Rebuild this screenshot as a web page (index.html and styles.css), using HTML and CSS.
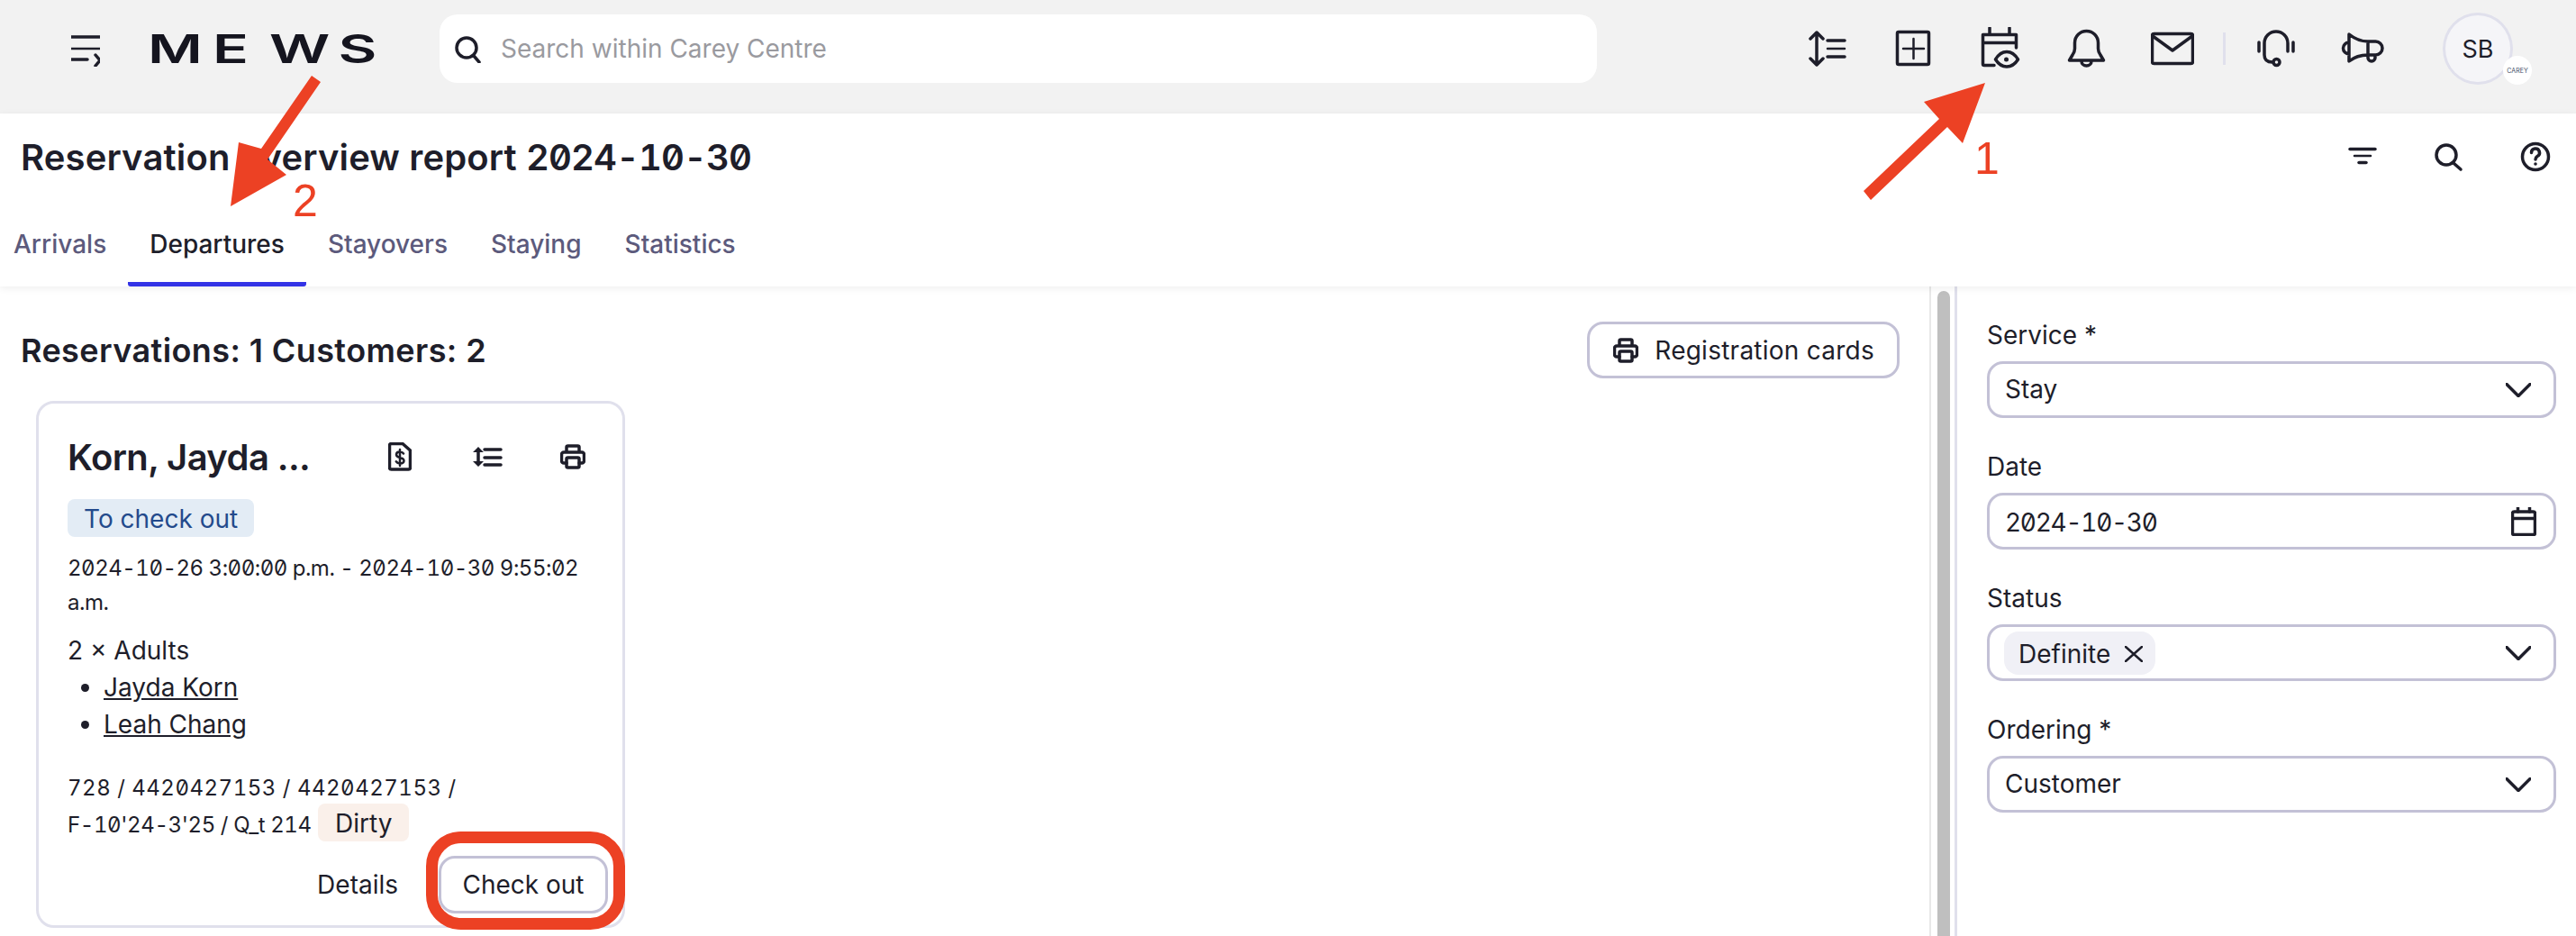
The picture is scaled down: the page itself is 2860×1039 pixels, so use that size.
FILE: index.html
```html
<!DOCTYPE html>
<html lang="en">
  <head>
    <meta charset="UTF-8" />
    <title>Reservation overview report</title>
    <link rel="stylesheet" href="styles.css">
  </head>
  <body>
    <header class="topbar">
      <svg class="menu-icon ico" width="32" height="40" viewBox="0 0 32 40"><path d="M0 7H32M0 32H18M27 27L32 33L27 39"/><path class="thin" d="M0 20H32"/></svg>
      <svg class="logo" width="254" height="32" viewBox="0 0 254 32"><text transform="scale(1.5 1)" x="-2 46 88 139" y="32" font-size="44" font-weight="600">MEWS</text></svg>
      <div class="search">
        <svg class="ico" width="32" height="32" viewBox="0 0 32 32"><circle cx="14" cy="15" r="11"/><path d="M22 24L28 31"/></svg>
        <span>Search within Carey Centre</span>
      </div>
      <div class="actions">
        <span class="icon-btn"><svg class="ico" width="48" height="48" viewBox="0 0 48 48"><path d="M13 6V42M6 13L13 6L20 13M6 35L13 42L20 35M25 15H44M25 33H44"/><path class="thin" d="M25 24H44"/></svg></span>
        <span class="icon-btn"><svg class="ico" width="48" height="48" viewBox="0 0 48 48"><rect x="6.5" y="5.5" width="35" height="36" rx="1.5"/><path class="thin" d="M13 24H36M24.5 13V35"/></svg></span>
        <span class="icon-btn"><svg class="ico" width="48" height="48" viewBox="0 0 48 48"><path d="M18 42.5H7a1.5 1.5 0 0 1-1.5-1.5V8.5H42.5V23M5.5 17.5H42.5M13 1V8M35 1V8M19.5 36C23 30 27 27.5 32 27.5S41 30 44.5 36C41 41.5 37 44 32 44S23 41.5 19.5 36Z"/><circle class="dot" cx="31.5" cy="36" r="2.5"/></svg></span>
        <span class="icon-btn"><svg class="ico" width="48" height="48" viewBox="0 0 48 48"><path d="M5.5 37L9 31Q11.5 27.5 11.5 24V17.5A13 13 0 0 1 37.5 17.5V24Q37.5 27.5 40 31L43.5 37ZM19 38a5.5 5 0 0 0 11 0"/></svg></span>
        <span class="icon-btn"><svg class="ico" width="48" height="48" viewBox="0 0 48 48"><rect x="1.5" y="7.5" width="45" height="33" rx="2"/><path d="M2 10L24 26L46 10"/></svg></span>
        <span class="divider"></span>
        <span class="icon-btn"><svg class="ico" width="48" height="48" viewBox="0 0 48 48"><path d="M5 17V27M43 17V27M37 27V18A13 13 0 0 0 11 18V31Q11 39 20 39"/><circle cx="24.5" cy="39" r="3.5"/></svg></span>
        <span class="icon-btn"><svg class="ico" width="48" height="48" viewBox="0 0 48 48"><path d="M9 8C14 12 22 16 30 16H38.5A7.5 7.5 0 0 1 38.5 31H30C22 31 14 34 9 38ZM9 17A6.5 6.5 0 0 0 9 30M30 16V34a4 4 0 0 0 8 0V31"/></svg></span>
        <div class="avatar">SB<span class="avatar-badge">CAREY</span></div>
      </div>
    </header>

    <div class="report-head">
      <div class="title-row">
        <h1>Reservation overview report <span class="num">2024-10-30</span></h1>
        <div class="title-actions">
          <span class="icon-btn"><svg class="ico" width="48" height="48" viewBox="0 0 48 48"><path d="M10 15.5H38"/><path class="thin" d="M15 23H33"/><path d="M20 30.5H28"/></svg></span>
          <span class="icon-btn"><svg class="ico" width="48" height="48" viewBox="0 0 48 48"><circle cx="21" cy="22" r="11"/><path d="M29 31L37 38"/></svg></span>
          <span class="icon-btn"><svg class="ico" width="48" height="48" viewBox="0 0 48 48"><circle cx="24" cy="24" r="14.5"/><path d="M19.5 19.5a4.5 4.5 0 1 1 6.5 4c-1.5 1-2 2-2 3.5"/><circle class="dot" cx="24" cy="32" r="1.8"/></svg></span>
        </div>
      </div>
      <nav class="tabs">
        <a class="tab">Arrivals</a>
        <a class="tab active">Departures</a>
        <a class="tab">Stayovers</a>
        <a class="tab">Staying</a>
        <a class="tab">Statistics</a>
      </nav>
    </div>

    <main class="content">
      <section class="results">
        <div class="results-head">
          <h2>Reservations: 1 Customers: 2</h2>
          <button class="btn btn-icon">
            <svg class="ico" width="28" height="28" viewBox="0 0 28 28"><path d="M7 9V3.5A1.5 1.5 0 0 1 8.5 2H19.5A1.5 1.5 0 0 1 21 3.5V9M7 21H4a2.5 2.5 0 0 1-2.5-2.5v-7A2.5 2.5 0 0 1 4 9H24a2.5 2.5 0 0 1 2.5 2.5v7A2.5 2.5 0 0 1 24 21H21"/><rect x="7" y="15" width="14" height="11" rx="1.5"/></svg>
            Registration cards
          </button>
        </div>

        <article class="card">
          <div class="card-head">
            <h3>Korn, Jayda ...</h3>
            <div class="card-actions">
              <span class="icon-btn"><svg class="ico" width="26" height="32" viewBox="0 0 26 32"><path d="M3.5 1.5H16L24.5 9V28a2 2 0 0 1-2 2H3.5a2 2 0 0 1-2-2V3.5a2 2 0 0 1 2-2Z"/><path class="thin" d="M17 12.5C16 11 15 10.5 13 10.5c-2.5 0-4 1.3-4 3.2 0 4.3 8.5 2.3 8.5 6.6 0 1.9-1.7 3.2-4.3 3.2-2 0-3.5-.8-4.4-2.2M13 8V26"/></svg></span>
              <span class="icon-btn"><svg class="ico" width="36" height="28" viewBox="0 0 36 28"><path class="dot" d="M3 9L9 3L15 9ZM3 19L9 25L15 19Z"/><path d="M9 7V21M16 6H34M16 15H34M16 23H34"/></svg></span>
              <span class="icon-btn"><svg class="ico" width="28" height="28" viewBox="0 0 28 28"><path d="M7 9V3.5A1.5 1.5 0 0 1 8.5 2H19.5A1.5 1.5 0 0 1 21 3.5V9M7 21H4a2.5 2.5 0 0 1-2.5-2.5v-7A2.5 2.5 0 0 1 4 9H24a2.5 2.5 0 0 1 2.5 2.5v7A2.5 2.5 0 0 1 24 21H21"/><rect x="7" y="15" width="14" height="11" rx="1.5"/></svg></span>
            </div>
          </div>
          <span class="badge badge-blue">To check out</span>
          <p class="dates num">2024-10-26 3:00:00 p.m. - 2024-10-30 9:55:02 a.m.</p>
          <p class="guests">2 × Adults</p>
          <ul class="guest-list">
            <li><a>Jayda Korn</a></li>
            <li><a>Leah Chang</a></li>
          </ul>
          <p class="refs"><span class="num">728 / 4420427153 / 4420427153 / <span class="refs-tail">F-10'24-3'25 / Q_t 214</span></span> <span class="badge badge-red">Dirty</span></p>
          <div class="card-foot">
            <span class="link-btn">Details</span>
            <button class="btn btn-small">Check out</button>
          </div>
        </article>
      </section>

      <div class="scrollbar"><div class="scrollbar-thumb"></div></div>

      <aside class="filters">
        <div class="field">
          <label>Service *</label>
          <div class="select">
            <span class="select-text">Stay</span>
            <svg class="ico chevron" width="28" height="16" viewBox="0 0 28 16"><path d="M1 1.5L14 14.5L27 1.5"/></svg>
          </div>
        </div>
        <div class="field">
          <label>Date</label>
          <div class="select">
            <span class="num select-date">2024-10-30</span>
            <svg class="ico calendar" width="28" height="32" viewBox="0 0 28 32"><rect x="1.5" y="5" width="25" height="25.5" rx="2"/><path d="M1.5 12.5H26.5M7.5 .5V5M20.5 .5V5"/></svg>
          </div>
        </div>
        <div class="field">
          <label>Status</label>
          <div class="select select-tags">
            <span class="tag">Definite
              <svg class="ico" width="20" height="18" viewBox="0 0 20 18"><path class="thin" d="M1 1L19 17M19 1L1 17"/></svg>
            </span>
            <svg class="ico chevron" width="28" height="16" viewBox="0 0 28 16"><path d="M1 1.5L14 14.5L27 1.5"/></svg>
          </div>
        </div>
        <div class="field">
          <label>Ordering *</label>
          <div class="select">
            <span class="select-text">Customer</span>
            <svg class="ico chevron" width="28" height="16" viewBox="0 0 28 16"><path d="M1 1.5L14 14.5L27 1.5"/></svg>
          </div>
        </div>
      </aside>
    </main>

    <!-- red marks drawn on top of the screenshot -->
    <svg class="annotations" width="2860" height="1039" viewBox="0 0 2860 1039">
      <polygon points="2204,92 2136,113 2153,132 2069,212 2077,222 2162,141 2179,159" />
      <polygon points="346,84 356,91 297,177 318,194 256,229 265,158 290,165" />
      <rect class="mark-box" x="479.5" y="929.5" width="208" height="96" rx="32" />
      <text x="2192" y="193">1</text>
      <text x="325" y="240">2</text>
    </svg>
  </body>
</html>
```

FILE: styles.css
```css
* {
  box-sizing: border-box;
}
html,
body {
  margin: 0;
  padding: 0;
  height: 1039px;
  overflow: hidden;
}
body {
  position: relative;
  font-family: Inter, "Noto Sans", sans-serif;
  font-size: 28px;
  color: #1e1e2a;
  background-color: #ffffff;
}
h1,
h2,
h3,
p,
ul {
  margin: 0;
  padding: 0;
}
.num {
  font-feature-settings: "tnum", "zero";
}

/* icons */
.ico {
  flex: none;
  fill: none;
  stroke: #1e1e2a;
  stroke-width: 3.5;
  stroke-linecap: round;
  stroke-linejoin: round;
}
.ico .thin {
  stroke-width: 2.5;
}
.ico .dot {
  fill: #1e1e2a;
  stroke: none;
}
.icon-btn {
  display: flex;
  align-items: center;
  justify-content: center;
  width: 96px;
  height: 48px;
}

/* top bar */
.topbar {
  display: flex;
  align-items: center;
  height: 126px;
  padding: 14px 70px 32px 79px;
  background-color: #f2f2f2;
}
.menu-icon {
  margin-right: 56px;
}
.logo {
  flex: none;
  margin-right: 67px;
  overflow: visible;
}
.logo text {
  fill: #15151f;
}
.search {
  display: flex;
  align-items: center;
  gap: 20px;
  width: 1285px;
  height: 76px;
  padding-left: 16px;
  border-radius: 20px;
  background-color: #ffffff;
  color: #9a9a9f;
}
.actions {
  display: flex;
  align-items: center;
  margin-left: auto;
}
.divider {
  width: 3px;
  height: 36px;
  margin: 0 8px;
  background-color: #e0e0ec;
}
.avatar {
  position: relative;
  display: flex;
  align-items: center;
  justify-content: center;
  width: 78px;
  height: 80px;
  margin-left: 41px;
  border: 3px solid #e0e0ec;
  border-radius: 50%;
  background-color: #f5f5f8;
  font-size: 27px;
}
.avatar-badge {
  position: absolute;
  right: -24px;
  bottom: -3px;
  display: flex;
  align-items: center;
  justify-content: center;
  width: 32px;
  height: 32px;
  border-radius: 50%;
  background-color: #ffffff;
  font-size: 7px;
  color: #3d4a63;
}

/* report title + tabs */
.report-head {
  position: relative;
  z-index: 1;
  height: 192px;
  background-color: #ffffff;
  box-shadow: 0 2px 8px rgba(0, 0, 0, 0.07);
}
.title-row {
  display: flex;
  align-items: center;
  justify-content: space-between;
  height: 96px;
  padding-left: 23px;
}
h1 {
  font-size: 40px;
  font-weight: 600;
  letter-spacing: 0.15px;
}
h1 .num {
  letter-spacing: -0.9px;
}
.title-actions {
  display: flex;
  margin-right: -3px;
}
.tabs {
  display: flex;
  height: 96px;
  margin-left: -9px;
}
.tab {
  display: flex;
  align-items: center;
  height: 96px;
  padding: 2px 24px 0;
  font-weight: 500;
  color: #5c5a7c;
}
.tab.active {
  color: #1e1e2a;
  border-bottom: 5px solid #3333e6;
  border-radius: 0 0 3px 3px;
  padding-top: 7px;
}

/* main area */
.content {
  display: flex;
  height: 721px;
}
.results {
  width: 2142px;
  padding: 39px 33px 0 23px;
}
.results-head {
  display: flex;
  align-items: center;
  justify-content: space-between;
}
h2 {
  font-size: 36px;
  font-weight: 600;
  letter-spacing: 0.4px;
}
.btn {
  display: flex;
  align-items: center;
  font-family: inherit;
  font-size: 28px;
  color: #1e1e2a;
  background-color: #ffffff;
  border: 3px solid #c3c1d6;
  border-radius: 18px;
}
.btn-icon {
  gap: 18px;
  height: 63px;
  padding: 0 25px 0 26px;
  letter-spacing: 0.25px;
}
.btn-small {
  justify-content: center;
  width: 188px;
  height: 64px;
}

/* reservation card */
.card {
  width: 654px;
  height: 585px;
  margin: 25px 0 0 17px;
  padding: 35px 32px 0;
  border: 3px solid #e0e0ec;
  border-radius: 20px;
}
.card-head {
  display: flex;
  align-items: center;
  justify-content: space-between;
  height: 48px;
  margin: 0 -25px 23px 0;
}
h3 {
  font-size: 40px;
  font-weight: 600;
  letter-spacing: -0.6px;
}
.card-actions {
  display: flex;
}
.badge {
  display: inline-block;
  height: 42px;
  padding: 0 18px;
  border-radius: 8px;
  line-height: 44px;
}
.badge-blue {
  background-color: #e3ecf5;
  color: #234a8c;
}
.badge-red {
  margin: -2px 0;
  padding: 0 19px;
  background-color: #faf0ea;
}
.dates {
  margin-top: 16px;
  font-size: 24px;
  letter-spacing: -0.5px;
  line-height: 38px;
}
.guests {
  margin-top: 13px;
  line-height: 42px;
}
.guest-list {
  padding-left: 40px;
  line-height: 41px;
}
.guest-list a {
  text-decoration: underline;
}
.refs {
  margin-top: 30px;
  font-size: 24px;
  letter-spacing: 0.5px;
  line-height: 39px;
}
.refs-tail {
  white-space: nowrap;
  letter-spacing: -0.4px;
}
.refs .badge {
  font-size: 28px;
  letter-spacing: 0;
}
.card-foot {
  display: flex;
  align-items: center;
  justify-content: flex-end;
  gap: 45px;
  margin: 15px -16px 0 0;
}

/* scrollbar between list and filters */
.scrollbar {
  width: 31px;
  padding: 5px 5px 0 7px;
  border-left: 2px solid #e8e8e8;
  border-right: 3px solid #e0e0ec;
}
.scrollbar-thumb {
  height: 100%;
  border-radius: 8px 8px 0 0;
  background-color: #bfbfbf;
}

/* filters panel */
.filters {
  flex: 1;
  padding: 35px 22px 0 33px;
}
.field {
  margin-bottom: 35px;
}
.field label {
  display: block;
  height: 36px;
  margin-bottom: 12px;
  line-height: 38px;
}
.select {
  display: flex;
  align-items: center;
  justify-content: space-between;
  height: 63px;
  padding: 0 25px 0 17px;
  border: 3px solid #c3c1d6;
  border-radius: 18px;
}
.select-text {
  margin-bottom: 2px;
}
.select-date {
  padding-top: 2px;
  letter-spacing: -1.3px;
}
.select-tags {
  padding-left: 16px;
}
.calendar {
  margin-right: -6px;
}
.tag {
  display: flex;
  align-items: center;
  gap: 16px;
  height: 48px;
  padding: 2px 14px 0 16px;
  border-radius: 16px;
  background-color: #f0f0f6;
}

/* annotations */
.annotations {
  position: absolute;
  top: 0;
  left: 0;
  z-index: 2;
  pointer-events: none;
}
.annotations polygon {
  fill: #ec4124;
}
.annotations text {
  font-family: "Liberation Sans", sans-serif;
  font-size: 50px;
  fill: #ec4124;
}
.mark-box {
  fill: none;
  stroke: #ec4124;
  stroke-width: 13;
}
```
